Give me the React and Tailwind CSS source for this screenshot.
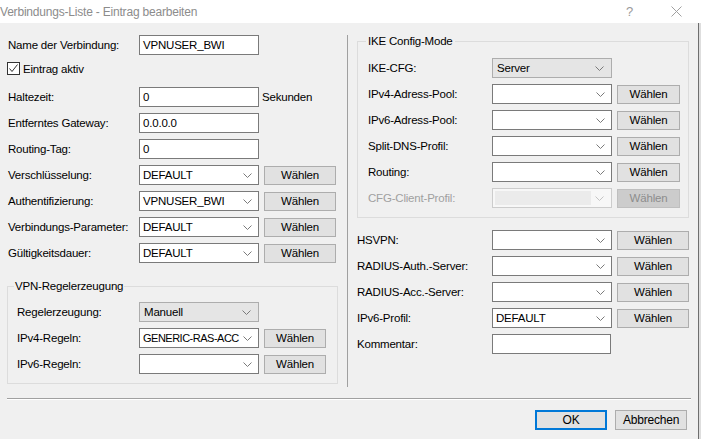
import React from "react";

const Chevron = ({ light }) => (
    <svg width="9" height="5" viewBox="0 0 9 5" className="shrink-0">
        <polyline points="0.5,0.5 4.5,4.5 8.5,0.5" fill="none" stroke={light ? "#c4c4c4" : "#7a7a7a"} strokeWidth="1" />
    </svg>
);

function TextInput({ value, width = "w-[120px]" }) {
    return (
        <div className={`${width} h-5 border border-[#7a7a7a] bg-white px-[3px] flex items-center text-black`}>
            {value}
        </div>
    );
}

function Select({ value, variant, tight }) {
    if (variant === "gray") {
        return (
            <div className="w-[120px] h-5 border border-[#adadad] bg-[#e5e5e5] pl-[4px] pr-[7px] flex items-center justify-between">
                <span>{value}</span>
                <Chevron />
            </div>
        );
    }
    if (variant === "disabled") {
        return (
            <div className="w-[120px] h-5 border border-[#cccccc] bg-[#f7f7f7] pl-[2px] pr-[7px] flex items-center justify-between">
                <div className="w-[96px] h-[14px] bg-[#ebebeb]" />
                <Chevron light />
            </div>
        );
    }
    return (
        <div className="w-[120px] h-5 border border-[#7a7a7a] bg-white pl-[3px] pr-[6px] flex items-center justify-between">
            <span className={`whitespace-nowrap ${tight ? "tracking-[-0.5px] text-[11px]" : ""}`}>{value}</span>
            <Chevron />
        </div>
    );
}

function Btn({ width = "w-[72px]", disabled }) {
    return (
        <div
            className={`${width} h-[19px] ml-[5px] border flex items-center justify-center ${disabled
                ? "border-[#bfbfbf] bg-[#cccccc] text-[#8c8c8c]"
                : "border-[#adadad] bg-[#e1e1e1] text-black"
                }`}
        >
            Wählen
        </div>
    );
}

function Row({ label, labelW, children, disabled }) {
    return (
        <div className="h-5 flex items-center">
            <div className={`${labelW} shrink-0 ${disabled ? "text-[#a0a0a0]" : "text-black"}`}>{label}</div>
            {children}
        </div>
    );
}

export default function App() {
    return (
        <div className="w-[701px] h-[439px] bg-[#f0f0f0] font-['Liberation_Sans',Arial,sans-serif] text-[11.5px] tracking-[-0.2px] text-black overflow-hidden leading-[14px]">
            {/* title bar */}
            <div className="h-[23px] bg-white flex items-center text-[#8c8c8c] text-[12px]">
                <span>Verbindungs-Liste - Eintrag bearbeiten</span>
                <span className="ml-auto mr-[38px] text-[13px] text-[#9a9a9a]">?</span>
                <svg width="11" height="11" viewBox="0 0 11 11" className="mr-[19px]">
                    <path d="M0.5 0.5 L10.5 10.5 M10.5 0.5 L0.5 10.5" stroke="#a0a0a0" strokeWidth="1" />
                </svg>
            </div>

            <div className="flex h-[416px]">
                <div className="w-[698px]">
                    {/* columns */}
                    <div className="flex mt-[12px]">
                        {/* left column */}
                        <div className="w-[348px] h-[352px] border-r border-[#a0a0a0] shrink-0">
                            <div className="flex flex-col gap-[6px] pl-[8px]">
                                <Row label="Name der Verbindung:" labelW="w-[131px]">
                                    <TextInput value="VPNUSER_BWI" />
                                </Row>
                                <div className="h-5 flex items-start">
                                    <div className="w-[13px] h-[13px] ml-[-1px] mt-[1px] border border-[#333333] bg-white flex items-center justify-center">
                                        <svg width="11" height="11" viewBox="0 0 11 11">
                                            <polyline points="1.5,5.5 4,8.5 9.5,1.5" fill="none" stroke="#333333" strokeWidth="1" />
                                        </svg>
                                    </div>
                                    <span className="ml-[3px] mt-[1px]">Eintrag aktiv</span>
                                </div>
                                <Row label="Haltezeit:" labelW="w-[131px]">
                                    <TextInput value="0" />
                                    <span className="ml-[3px]">Sekunden</span>
                                </Row>
                                <Row label="Entferntes Gateway:" labelW="w-[131px]">
                                    <TextInput value="0.0.0.0" />
                                </Row>
                                <Row label="Routing-Tag:" labelW="w-[131px]">
                                    <TextInput value="0" />
                                </Row>
                                <Row label="Verschlüsselung:" labelW="w-[131px]">
                                    <Select value="DEFAULT" />
                                    <Btn />
                                </Row>
                                <Row label="Authentifizierung:" labelW="w-[131px]">
                                    <Select value="VPNUSER_BWI" />
                                    <Btn />
                                </Row>
                                <Row label="Verbindungs-Parameter:" labelW="w-[131px]">
                                    <Select value="DEFAULT" />
                                    <Btn />
                                </Row>
                                <Row label="Gültigkeitsdauer:" labelW="w-[131px]">
                                    <Select value="DEFAULT" />
                                    <Btn />
                                </Row>
                            </div>

                            <fieldset className="ml-[7px] mt-[17px] w-[331px] border border-[#dcdcdc] pl-[9px] pt-[10px] pb-[9px]">
                                <legend className="ml-[-3px] px-[1px] leading-[12px]">VPN-Regelerzeugung</legend>
                                <div className="flex flex-col gap-[6px]">
                                    <Row label="Regelerzeugung:" labelW="w-[122px]">
                                        <Select value="Manuell" variant="gray" />
                                    </Row>
                                    <Row label="IPv4-Regeln:" labelW="w-[122px]">
                                        <Select value="GENERIC-RAS-ACC" tight />
                                        <Btn width="w-[62px]" />
                                    </Row>
                                    <Row label="IPv6-Regeln:" labelW="w-[122px]">
                                        <Select value="" />
                                        <Btn width="w-[62px]" />
                                    </Row>
                                </div>
                            </fieldset>
                        </div>

                        {/* right column */}
                        <div className="flex-1">
                            <fieldset className="ml-[9px] w-[332px] border border-[#dcdcdc] pl-[10px] pt-[11px] pb-[9px]">
                                <legend className="ml-[-2px] px-[2px] leading-[12px]">IKE Config-Mode</legend>
                                <div className="flex flex-col gap-[6px]">
                                    <Row label="IKE-CFG:" labelW="w-[124px]">
                                        <Select value="Server" variant="gray" />
                                    </Row>
                                    <Row label="IPv4-Adress-Pool:" labelW="w-[124px]">
                                        <Select value="" />
                                        <Btn width="w-[63px]" />
                                    </Row>
                                    <Row label="IPv6-Adress-Pool:" labelW="w-[124px]">
                                        <Select value="" />
                                        <Btn width="w-[63px]" />
                                    </Row>
                                    <Row label="Split-DNS-Profil:" labelW="w-[124px]">
                                        <Select value="" />
                                        <Btn width="w-[63px]" />
                                    </Row>
                                    <Row label="Routing:" labelW="w-[124px]">
                                        <Select value="" />
                                        <Btn width="w-[63px]" />
                                    </Row>
                                    <Row label="CFG-Client-Profil:" labelW="w-[124px]" disabled>
                                        <Select value="" variant="disabled" />
                                        <Btn width="w-[63px]" disabled />
                                    </Row>
                                </div>
                            </fieldset>

                            <div className="flex flex-col gap-[6px] pl-[9px] mt-[12px]">
                                <Row label="HSVPN:" labelW="w-[135px]">
                                    <Select value="" />
                                    <Btn />
                                </Row>
                                <Row label="RADIUS-Auth.-Server:" labelW="w-[135px]">
                                    <Select value="" />
                                    <Btn />
                                </Row>
                                <Row label="RADIUS-Acc.-Server:" labelW="w-[135px]">
                                    <Select value="" />
                                    <Btn />
                                </Row>
                                <Row label="IPv6-Profil:" labelW="w-[135px]">
                                    <Select value="DEFAULT" />
                                    <Btn />
                                </Row>
                                <Row label="Kommentar:" labelW="w-[135px]">
                                    <TextInput value="" width="w-[119px]" />
                                </Row>
                            </div>
                        </div>
                    </div>

                    {/* separator */}
                    <div className="mx-[7px] mt-[11px] border-t border-[#a0a0a0] border-b border-b-white" />

                    {/* buttons */}
                    <div className="flex justify-end gap-[8px] pr-[11px] mt-[10px]">
                        <div className="w-[72px] h-[20px] border-2 border-[#0078d7] bg-[#e1e1e1] flex items-center justify-center text-[12px]">
                            OK
                        </div>
                        <div className="w-[72px] h-[20px] border border-[#adadad] bg-[#e1e1e1] flex items-center justify-center text-[12px]">
                            Abbrechen
                        </div>
                    </div>
                </div>
                <div className="w-[3px] border-l border-[#6e6e6e] bg-[#dedede]" />
            </div>
        </div>
    );
}
